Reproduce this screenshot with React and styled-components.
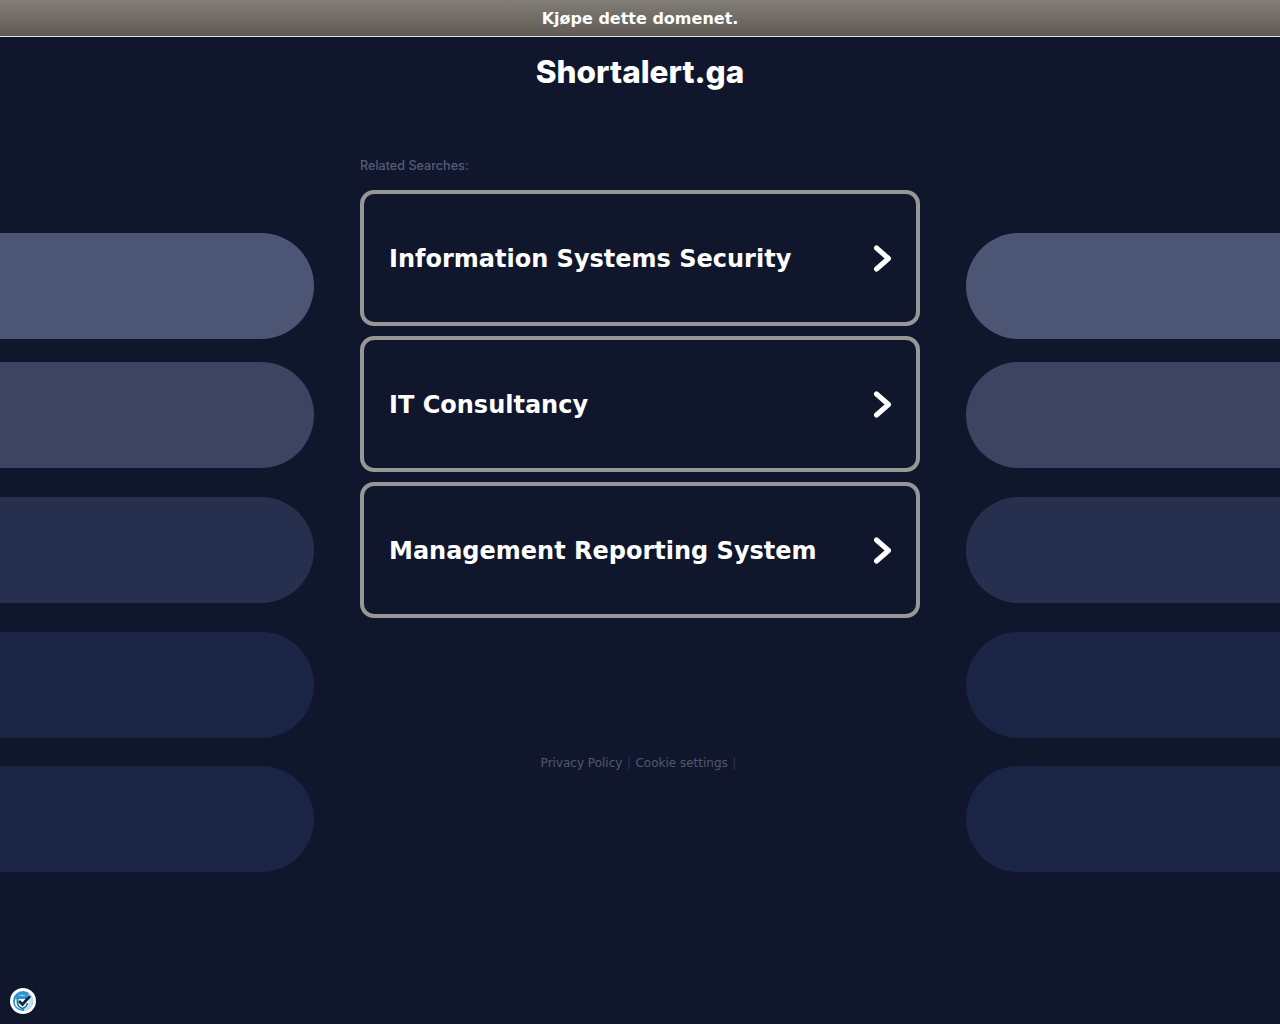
import React from "react";
import styled, { createGlobalStyle } from "styled-components";

const Global = createGlobalStyle`
  html, body { margin: 0; padding: 0; background: #10172d; }
  body { font-family: "DejaVu Sans", sans-serif; }
`;

const Page = styled.div`
  position: relative;
  height: 1024px;
  overflow: hidden;
  background: #10172d;
`;

const TopBar = styled.a`
  display: flex;
  align-items: center;
  justify-content: center;
  height: 36px;
  border-bottom: 1px solid #e8e6e3;
  background: linear-gradient(#827d77, #5f5a54);
  color: #fff;
  font-size: 16px;
  font-weight: 700;
`;

const Title = styled.h1`
  margin: 0;
  height: 68px;
  display: flex;
  align-items: center;
  justify-content: center;
  color: #fff;
  font-family: "Inter", sans-serif;
  font-size: 31.5px;
  font-weight: 800;
`;

const Columns = styled.div`
  display: grid;
  grid-template-columns: 314.3px 560px 314.3px;
  justify-content: space-between;
`;

const Side = styled.div`
  display: flex;
  flex-direction: column;
  padding-top: 128px;
`;

const Pill = styled.div`
  height: 106.4px;
  margin-bottom: ${(p) => p.$gap}px;
  background-color: ${(p) => p.$color};
  background-image: ${(p) =>
    p.$dotted
      ? `radial-gradient(circle, rgba(16,23,45,.3) 0.8px, transparent 1.2px),
         radial-gradient(circle, rgba(16,23,45,.3) 0.8px, transparent 1.2px)`
      : "none"};
  background-size: 4px 4px;
  background-position: 0 0, 2px 2px;
  border-radius: ${(p) => (p.$right ? "53.2px 0 0 53.2px" : "0 53.2px 53.2px 0")};
`;

const Center = styled.main`
  display: flex;
  flex-direction: column;
`;

const Related = styled.div`
  margin-top: 52px;
  height: 18px;
  line-height: 18px;
  font-family: "Inter", sans-serif;
  font-size: 12.6px;
  font-weight: 500;
  color: #545c76;
`;

const Links = styled.div`
  display: flex;
  flex-direction: column;
  gap: 10px;
  margin-top: 15px;
`;

const LinkBox = styled.a`
  box-sizing: border-box;
  display: flex;
  align-items: center;
  justify-content: space-between;
  height: 136px;
  padding: 1px 24px 0 25px;
  border: 4px solid #979797;
  border-radius: 14px;
  color: #fff;
  font-size: 24px;
  font-weight: 700;
`;

const Footer = styled.div`
  margin-top: 137px;
  display: flex;
  justify-content: center;
  gap: 4.5px;
  padding-right: 3px;
  font-size: 12px;
  line-height: 16px;
  color: #505873;
`;

const Separator = styled.span`
  color: #30374f;
`;

const Badge = styled.svg`
  position: absolute;
  left: 10px;
  bottom: 10px;
  width: 26px;
  height: 26px;
`;

const Chevron = () => (
  <svg width="20" height="28" viewBox="0 0 20 28" fill="none">
    <path d="M4.5 3 L16.5 13.5 L4.5 24" stroke="#fff" strokeWidth="5" strokeLinecap="round" strokeLinejoin="round" />
  </svg>
);

const pills = [
  { color: "#4c5573", gap: 22.6 },
  { color: "#3c4461", gap: 28.6 },
  { color: "#272f4f", gap: 28.6 },
  { color: "#1d2749", gap: 27.6, dotted: true },
  { color: "#1d2749", gap: 0, dotted: true },
];

const SideColumn = ({ right }) => (
  <Side>
    {pills.map((p, i) => (
      <Pill key={i} $color={p.color} $gap={p.gap} $dotted={p.dotted} $right={right} />
    ))}
  </Side>
);

export default function App() {
  return (
    <Page>
      <Global />
      <TopBar>Kjøpe dette domenet.</TopBar>
      <Title>Shortalert.ga</Title>
      <Columns>
        <SideColumn />
        <Center>
          <Related>Related Searches:</Related>
          <Links>
            <LinkBox>Information Systems Security<Chevron /></LinkBox>
            <LinkBox>IT Consultancy<Chevron /></LinkBox>
            <LinkBox>Management Reporting System<Chevron /></LinkBox>
          </Links>
          <Footer>
            <span>Privacy Policy</span>
            <Separator>|</Separator>
            <span>Cookie settings</span>
            <Separator>|</Separator>
          </Footer>
        </Center>
        <SideColumn right />
      </Columns>
      <Badge viewBox="0 0 26 26">
        <circle cx="13" cy="13" r="13" fill="#fff" />
        <path d="M13 3 A10 10 0 1 0 23 13 A10 10 0 0 0 13 3 Z" fill="#2b93cf" />
        <path d="M19 5 A10 10 0 0 1 23 13 A10 10 0 0 1 14 23 L14 14 Z" fill="#bfe0f3" />
        <circle cx="12" cy="14" r="7.2" fill="#fff" />
        <path d="M6 7.5 H17 V11 H6 Z" fill="#2b93cf" />
        <path d="M7.5 11 V15 Q8 19 12.5 20.5 Q17 19 17.5 15" fill="none" stroke="#1c76ab" strokeWidth="1.8" />
        <path d="M9 13 L12.5 16.5 L20 8" fill="none" stroke="#12234a" strokeWidth="2.8" />
      </Badge>
    </Page>
  );
}
